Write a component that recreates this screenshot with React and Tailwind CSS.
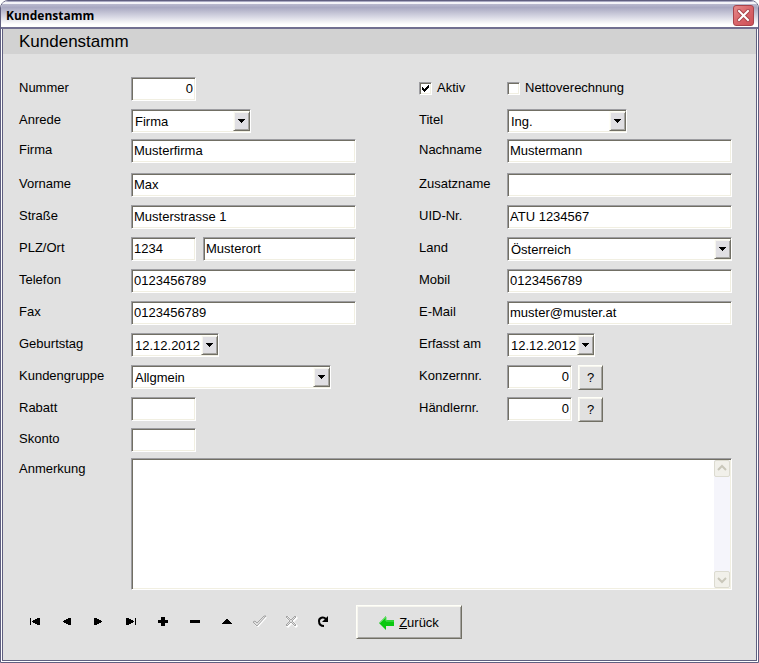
const sunken =
  'border border-t-[#9d9da1] border-l-[#9d9da1] border-r-white border-b-white bg-white shadow-[inset_1px_1px_#716f64,inset_-1px_-1px_#f1efe2]';
const raised =
  'border border-t-[#fffff8] border-l-[#fffff8] border-r-[#716f64] border-b-[#716f64] shadow-[inset_1px_1px_#f6f5ee,inset_-1px_-1px_#a5a4a0]';

const salutations = ['Firma', 'Herr', 'Frau'];
const titles = ['Ing.', 'Dr.', 'Mag.'];
const countries = ['Österreich', 'Deutschland', 'Schweiz'];
const groups = ['Allgmein', 'Stammkunden'];

const navItems = [
  { name: 'Erster Datensatz', d: 'M0 2h1v7H0zM2 5h1V4h2V3h2V2h3v7H7V8H5V7H3V6H2z' },
  { name: 'Voriger Datensatz', d: 'M1 5h1V4h2V3h2V2h3v7H6V8H4V7H2V6H1z' },
  { name: 'Nächster Datensatz', d: 'M8 5H7V4H5V3H3V2H0v7h3V8h2V7h2V6h1z' },
  { name: 'Letzter Datensatz', d: 'M9 2h1v7H9zM8 5H7V4H5V3H3V2H0v7h3V8h2V7h2V6h1z' },
  { name: 'Einfügen', d: 'M3 1h4v3h3v3H7v3H3V7H0V4h3z' },
  { name: 'Löschen', d: 'M0 4h10v3H0z' },
  { name: 'Bearbeiten', d: 'M0 8V7h1V6h1V5h1V4h1V3h2v1h1v1h1v1h1v1h1v1z' },
];

function Label({ htmlFor, right, children }) {
  return (
    <label htmlFor={htmlFor} className={`leading-[22px] ${right ? 'pl-[63px]' : ''}`}>
      {children}
    </label>
  );
}

function TextField({ id, value = '', className = 'w-full', ...rest }) {
  return (
    <input id={id} type="text" defaultValue={value} className={`h-6 min-w-0 px-[2px] pb-[2px] outline-none ${sunken} ${className}`} {...rest} />
  );
}

function DropArrow() {
  return (
    <svg width="7" height="4" viewBox="0 0 7 4" shapeRendering="crispEdges" aria-hidden="true">
      <path d="M0 0h7v1H6v1H5v1H4v1H3V3H2V2H1V1H0z" />
    </svg>
  );
}

function Combo({ id, options, className }) {
  return (
    <div className={`relative h-6 ${className}`}>
      <select id={id} className={`size-full appearance-none pt-[2px] pr-5 pl-[3px] outline-none ${sunken}`}>
        {options.map((option) => (
          <option key={option}>{option}</option>
        ))}
      </select>
      <span className={`pointer-events-none absolute inset-y-[2px] right-px flex w-[17px] items-center justify-center bg-[#e0dfe3] ${raised}`}>
        <DropArrow />
      </span>
    </div>
  );
}

function DateField({ id, value }) {
  return (
    <div className={`flex h-6 w-[88px] py-px pl-px ${sunken}`}>
      <input id={id} type="text" defaultValue={value} className="min-w-0 flex-1 bg-transparent pt-[2px] pl-[2px] outline-none" />
      <button type="button" aria-label="Kalender öffnen" className={`flex w-[17px] items-center justify-center bg-[#e0dfe3] ${raised}`}>
        <DropArrow />
      </button>
    </div>
  );
}

function Check({ label, checked }) {
  return (
    <label className="flex h-[22px] items-center gap-[5px]">
      <span className="relative size-[13px]">
        <input type="checkbox" defaultChecked={checked} className={`peer block size-[13px] appearance-none ${sunken}`} />
        <svg className="pointer-events-none absolute inset-0 hidden peer-checked:block" width="13" height="13" viewBox="0 0 13 13" shapeRendering="crispEdges">
          <path d="M3 5h1v1h1v1h1V6h1V5h1V4h1V3h1v3H9v1H8v1H7v1H6v1H5V9H4V8H3z" />
        </svg>
      </span>
      {label}
    </label>
  );
}

function LookupField({ id, label }) {
  return (
    <div className="flex gap-[6px]">
      <TextField id={id} value="0" className="w-[65px] text-right" />
      <button type="button" aria-label={label} className={`size-[25px] pt-px ${raised}`}>?</button>
    </div>
  );
}

function NavButton({ name, disabled, children }) {
  return (
    <button type="button" aria-label={name} disabled={disabled} className="flex h-6 w-8 items-center justify-center">
      <svg width="16" height="14" viewBox="-3 -1 16 14">{children}</svg>
    </button>
  );
}

function ScrollCap({ d }) {
  return (
    <span className="flex h-[17px] items-center justify-center rounded-[2px] border border-[#dcdbd0] bg-[#f1f0ea]">
      <svg width="14" height="13" viewBox="0 0 14 13" fill="none" stroke="#c9c7ba" strokeWidth="2">
        <path d={d} />
      </svg>
    </span>
  );
}

function TitleBar() {
  return (
    <header className="flex h-7 items-center justify-between border-b-2 border-[#716f91] bg-linear-to-b from-[#c8c8d8] from-0% via-[#a9a9c2] via-25% to-white to-90% pt-[3px] pr-1 pl-[5px] shadow-[inset_0_1px_#a9a9c2,inset_0_3px_#f4f4f8]">
      <span className="pt-px font-['Open_Sans',sans-serif] text-xs font-bold">Kundenstamm</span>
      <button type="button" aria-label="Schließen" className="flex size-[21px] items-center justify-center rounded-[3px] border border-[#a8434a] bg-linear-to-br from-[#e58a8a] via-[#d9646a] to-[#cd5057]">
        <svg width="13" height="13" viewBox="0 0 13 13" fill="none" strokeLinecap="square">
          <path d="M2 2l9 9M11 2l-9 9" stroke="#a8434a" strokeWidth="4" />
          <path d="M2 2l9 9M11 2l-9 9" stroke="white" strokeWidth="2" />
        </svg>
      </button>
    </header>
  );
}

export default function App() {
  return (
    <div className="flex min-h-screen flex-col bg-white font-['Liberation_Sans',Arial,sans-serif] text-[13px] text-black">
      <div className="flex flex-1 flex-col overflow-hidden rounded-t-lg border border-[#605f80] bg-white">
        <TitleBar />
        <main className="mx-px mb-px flex-1 border border-t-0 border-[#605f80] bg-[#e1e1e1]">
          <h1 className="bg-[#d2d2d2] pl-4 text-[17px] leading-[25px]">Kundenstamm</h1>
          <form className="pt-[23px] pr-6 pl-4">
            <div className="grid grid-cols-[112px_minmax(0,1fr)_151px_minmax(0,1fr)] grid-rows-[32px_30px_34px_repeat(7,32px)_31px_30px_auto] items-start">
              <Label htmlFor="nummer">Nummer</Label>
              <TextField id="nummer" value="0" className="w-[65px] text-right" />
              <div className="pl-[63px]"><Check label="Aktiv" checked /></div>
              <Check label="Nettoverechnung" />

              <Label htmlFor="anrede">Anrede</Label>
              <Combo id="anrede" options={salutations} className="w-[120px]" />
              <Label htmlFor="titel" right>Titel</Label>
              <Combo id="titel" options={titles} className="w-[120px]" />

              <Label htmlFor="firma">Firma</Label>
              <TextField id="firma" value="Musterfirma" />
              <Label htmlFor="nachname" right>Nachname</Label>
              <TextField id="nachname" value="Mustermann" />

              <Label htmlFor="vorname">Vorname</Label>
              <TextField id="vorname" value="Max" />
              <Label htmlFor="zusatzname" right>Zusatzname</Label>
              <TextField id="zusatzname" />

              <Label htmlFor="strasse">Straße</Label>
              <TextField id="strasse" value="Musterstrasse 1" />
              <Label htmlFor="uid" right>UID-Nr.</Label>
              <TextField id="uid" value="ATU 1234567" />

              <Label htmlFor="plz">PLZ/Ort</Label>
              <div className="flex gap-[7px]">
                <TextField id="plz" value="1234" className="w-[65px]" />
                <TextField id="ort" value="Musterort" className="flex-1" aria-label="Ort" />
              </div>
              <Label htmlFor="land" right>Land</Label>
              <Combo id="land" options={countries} className="w-full" />

              <Label htmlFor="telefon">Telefon</Label>
              <TextField id="telefon" value="0123456789" />
              <Label htmlFor="mobil" right>Mobil</Label>
              <TextField id="mobil" value="0123456789" />

              <Label htmlFor="fax">Fax</Label>
              <TextField id="fax" value="0123456789" />
              <Label htmlFor="email" right>E-Mail</Label>
              <TextField id="email" value="muster@muster.at" />

              <Label htmlFor="geburtstag">Geburtstag</Label>
              <DateField id="geburtstag" value="12.12.2012" />
              <Label htmlFor="erfasst" right>Erfasst am</Label>
              <DateField id="erfasst" value="12.12.2012" />

              <Label htmlFor="gruppe">Kundengruppe</Label>
              <Combo id="gruppe" options={groups} className="w-[200px]" />
              <Label htmlFor="konzern" right>Konzernnr.</Label>
              <LookupField id="konzern" label="Konzern suchen" />

              <Label htmlFor="rabatt">Rabatt</Label>
              <TextField id="rabatt" className="w-[65px]" />
              <Label htmlFor="haendler" right>Händlernr.</Label>
              <LookupField id="haendler" label="Händler suchen" />

              <Label htmlFor="skonto">Skonto</Label>
              <TextField id="skonto" className="col-span-3 w-[65px]" />

              <Label htmlFor="anmerkung">Anmerkung</Label>
              <div className={`col-span-3 flex h-[132px] p-px ${sunken}`}>
                <textarea id="anmerkung" className="min-w-0 flex-1 resize-none p-[2px] outline-none" />
                <div className="flex w-4 flex-col justify-between bg-[#f5f5fb]" aria-hidden="true">
                  <ScrollCap d="M3 8l4-4 4 4" />
                  <ScrollCap d="M3 5l4 4 4-4" />
                </div>
              </div>
            </div>

            <div className="mt-[15px] flex items-center">
              {navItems.map((item) => (
                <NavButton key={item.name} name={item.name}>
                  <path d={item.d} shapeRendering="crispEdges" />
                </NavButton>
              ))}
              <NavButton name="Übernehmen" disabled>
                <path d="M1 8l3 2 8-9" fill="none" stroke="white" strokeWidth="2" />
                <path d="M-1 6l2-1 2 2 7-7 2 0-9 10z" fill="#e1e1e1" stroke="#a5a5a5" />
              </NavButton>
              <NavButton name="Abbrechen" disabled>
                <path d="M1 1l10 10M11 1L1 11" fill="none" stroke="white" strokeWidth="3" />
                <path d="M1 0l4 4 4-4 1 1-4 4 4 4-1 1-4-4-4 4-1-1 4-4-4-4z" fill="#e1e1e1" stroke="#a5a5a5" />
              </NavButton>
              <NavButton name="Aktualisieren">
                <path d="M8 3C5 0 1 2 1 5s2 5 5 5" fill="none" stroke="black" strokeWidth="2" />
                <path d="M10 0v6H4z" />
              </NavButton>
              <button type="button" className={`ml-[17px] flex h-[34px] w-[106px] items-center justify-center gap-1 pt-px ${raised}`}>
                <svg width="16" height="14" viewBox="0 0 16 14">
                  <path d="M0 7l7-7v4h8v6H7v4z" fill="#0bc810" />
                  <path d="M1 7l6-6v4h8" fill="none" stroke="#5be05e" />
                </svg>
                <span><u>Z</u>urück</span>
              </button>
            </div>
          </form>
        </main>
      </div>
    </div>
  );
}
